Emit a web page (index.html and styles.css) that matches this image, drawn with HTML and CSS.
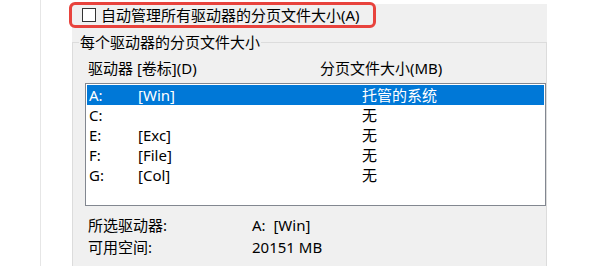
FILE: index.html
```html
<!DOCTYPE html>
<html lang="zh-CN">
<head>
<meta charset="utf-8">
<title>虚拟内存</title>
<link rel="stylesheet" href="styles.css">
</head>
<body>
<div class="page">
  <div class="gutter"></div>
  <div class="spacer"></div>
  <div class="panel">
    <div class="check-row">
      <span class="checkbox"></span>
      <span class="check-label">自动管理所有驱动器的分页文件大小(A)</span>
      <span class="highlight"></span>
    </div>
    <fieldset class="group">
      <legend class="group-title">每个驱动器的分页文件大小</legend>
      <div class="list-head">
        <span class="head-drive">驱动器 [卷标](D)</span>
        <span class="head-size">分页文件大小(MB)</span>
      </div>
      <div class="listbox">
        <div class="row selected"><span class="c1">A:</span><span class="c2">[Win]</span><span class="c3">托管的系统</span></div>
        <div class="row"><span class="c1">C:</span><span class="c2"></span><span class="c3">无</span></div>
        <div class="row"><span class="c1">E:</span><span class="c2">[Exc]</span><span class="c3">无</span></div>
        <div class="row"><span class="c1">F:</span><span class="c2">[File]</span><span class="c3">无</span></div>
        <div class="row"><span class="c1">G:</span><span class="c2">[Col]</span><span class="c3">无</span></div>
      </div>
      <div class="info">
        <div class="info-row"><span class="info-label">所选驱动器:</span><span class="info-value">A:&nbsp;&nbsp;[Win]</span></div>
        <div class="info-row"><span class="info-label">可用空间:</span><span class="info-value">20151 MB</span></div>
      </div>
    </fieldset>
  </div>
</div>
</body>
</html>
```
FILE: styles.css
```css
html, body {
  margin: 0;
  padding: 0;
  background: #ffffff;
}
body {
  font-family: "Noto Sans", "Noto Sans CJK SC", sans-serif;
  font-size: 15px;
  color: #000000;
  width: 600px;
  height: 266px;
  overflow: hidden;
}
.page {
  display: flex;
  height: 266px;
}
.gutter {
  width: 40px;
  border-right: 1px solid #e6e6e6;
  flex: none;
}
.spacer {
  width: 31px;
  flex: none;
}
.panel {
  width: 475px;
  flex: none;
  margin-top: 4px;
  background: #f0f0f0;
  display: flex;
  flex-direction: column;
}
.check-row {
  position: relative;
  height: 28px;
  display: flex;
  align-items: flex-start;
}
.checkbox {
  width: 12px;
  height: 12px;
  border: 1px solid #333333;
  background: #ffffff;
  margin: 4px 0 0 10px;
  flex: none;
}
.check-label {
  margin-left: 5px;
  line-height: 20px;
  margin-top: 1px;
  white-space: nowrap;
}
.highlight {
  position: absolute;
  left: -3px;
  top: -2px;
  width: 301px;
  height: 20px;
  border: 3px solid #e8433d;
  border-radius: 6px;
}
.group {
  margin: 0;
  padding: 0;
  border: 1px solid #dcdcdc;
  border-bottom: none;
  flex: 1;
  min-width: 0;
}
.group-title {
  margin-left: 6px;
  padding: 0 1px;
  line-height: 20px;
  white-space: nowrap;
}
.list-head {
  display: flex;
  height: 20px;
  line-height: 20px;
  margin-top: 6px;
  padding-left: 15px;
  white-space: nowrap;
}
.head-drive {
  width: 232px;
}
.listbox {
  margin: 5px 0 0 12px;
  border: 1px solid #828790;
  background: #ffffff;
  height: 121px;
  padding: 0 1px;
}
.row {
  display: flex;
  height: 20px;
  line-height: 20px;
  white-space: nowrap;
}
.row.selected {
  background: #0078d7;
  color: #ffffff;
  margin-top: 1px;
}
.c1 {
  width: 49px;
  padding-left: 2px;
}
.c2 {
  width: 224px;
}
.info {
  padding: 8px 0 0 15px;
}
.info-row {
  display: flex;
  height: 22px;
  line-height: 22px;
  white-space: nowrap;
}
.info-label {
  width: 164px;
}
```
